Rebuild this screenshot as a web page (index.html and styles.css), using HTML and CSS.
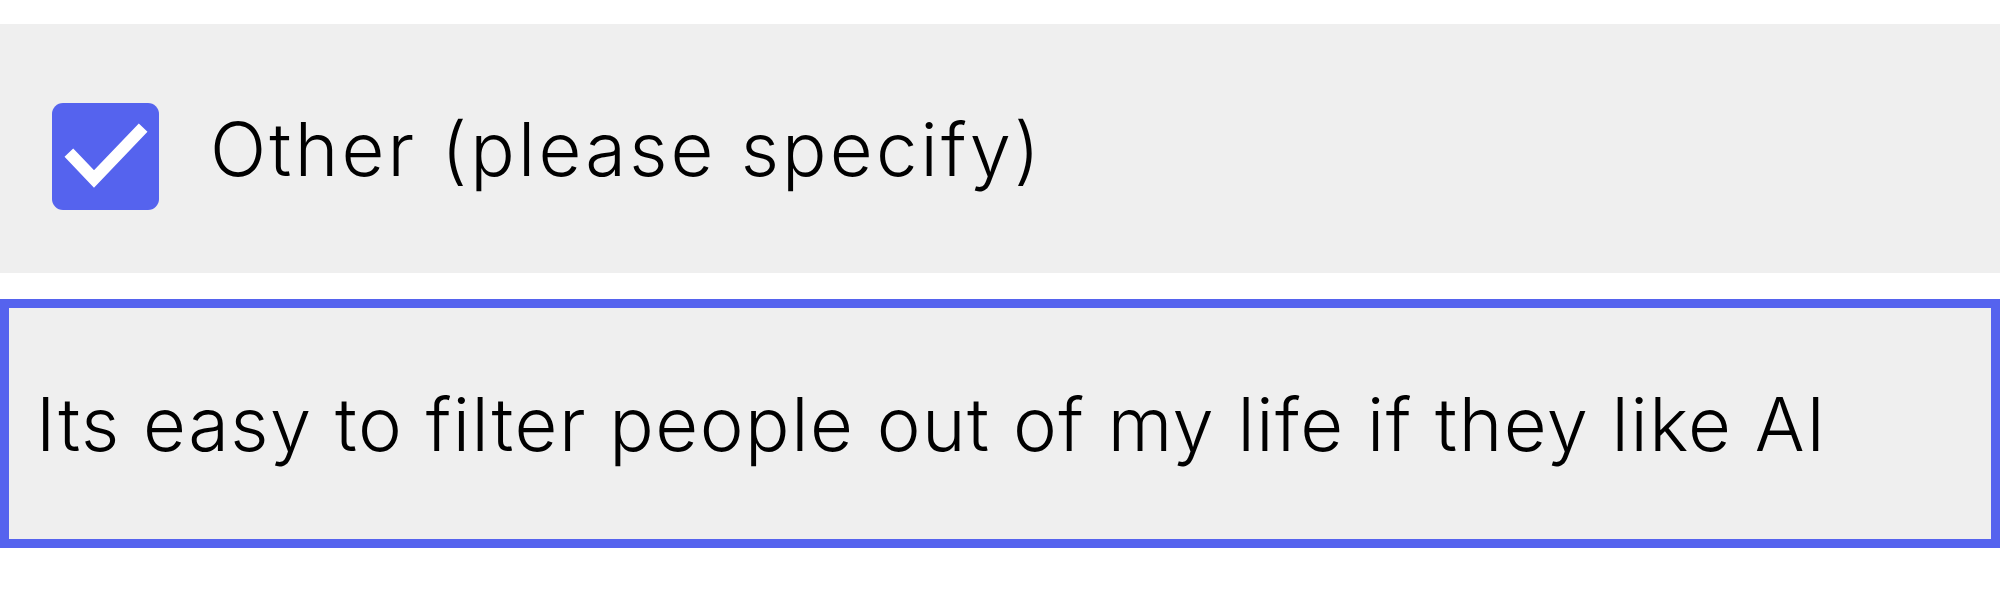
FILE: index.html
```html
<!DOCTYPE html>
<html lang="en">
<head>
<meta charset="utf-8">
<title>Other (please specify)</title>
<link rel="stylesheet" href="styles.css">
</head>
<body>
  <div class="form">
    <label class="option">
      <span class="checkbox">
        <svg viewBox="0 0 107 107" width="107" height="107" aria-hidden="true">
          <path d="M21 54 L42 76 L87 29" fill="none" stroke="#fff" stroke-width="12" stroke-linecap="square" stroke-linejoin="miter"/>
        </svg>
      </span>
      <span class="option-label">Other (please specify)</span>
    </label>
    <input class="other-input" type="text" value="Its easy to filter people out of my life if they like AI">
  </div>
</body>
</html>
```
FILE: styles.css
```css
html, body {
  margin: 0;
  padding: 0;
  background: #ffffff;
}

.form {
  display: flex;
  flex-direction: column;
  padding-top: 24px;
  gap: 26px;
}

.option {
  display: flex;
  align-items: center;
  height: 249px;
  box-sizing: border-box;
  background: #efefef;
  padding-left: 52px;
}

.checkbox {
  display: flex;
  width: 107px;
  height: 107px;
  border-radius: 11px;
  background: #5563ee;
  margin-top: 16px;
  flex: none;
}

.option-label {
  margin-left: 51px;
  font-family: "Inter", "Noto Sans", sans-serif;
  font-weight: 300;
  font-size: 74px;
  line-height: 1;
  letter-spacing: 3.2px;
  color: #000;
}

.other-input {
  display: block;
  width: 100%;
  height: 249px;
  box-sizing: border-box;
  margin: 0;
  border: 9px solid #5563ee;
  background: #efefef;
  padding: 0 0 0 27px;
  outline: none;
  font-family: "Inter", "Noto Sans", sans-serif;
  font-weight: 300;
  font-size: 74px;
  line-height: 1;
  letter-spacing: 1.5px;
  color: #000;
}
```
